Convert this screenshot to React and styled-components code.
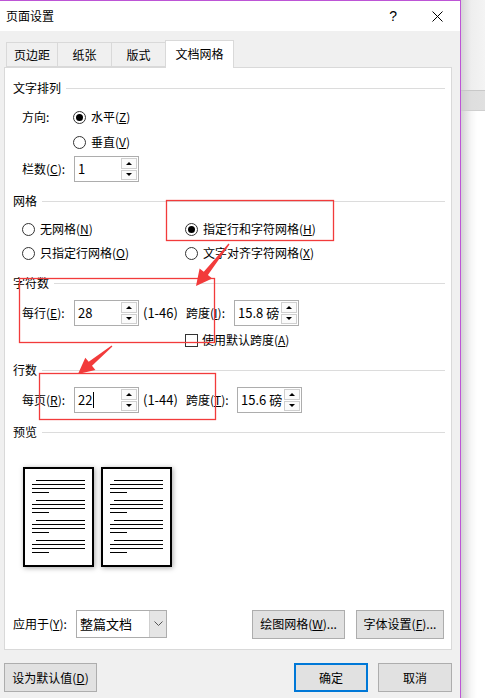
import styled, { createGlobalStyle } from "styled-components";

const GlobalStyle = createGlobalStyle`
    body{
        margin: 0;
        overflow: hidden;
        background: #fff;
        font-family: "Noto Sans CJK SC", "Noto Sans", "Liberation Sans", sans-serif;
        font-size: 12px;
        color: #000;
    }
`;

const Screen = styled.div`
    display: flex;
    width: 485px;
    height: 698px;
    overflow: hidden;
`;

const Dialog = styled.div`
    position: relative;
    width: 461px;
    flex-shrink: 0;
    box-sizing: border-box;
    border-top: 1px solid #bd55d6;
    border-right: 1px solid #bd55d6;
    background: #f0f0f0;
    display: flex;
    flex-direction: column;
`;

const TitleBar = styled.div`
    height: 30px;
    background: #fff;
    display: flex;
    align-items: center;
    padding-left: 6px;
    line-height: 16px;
`;

const TitleText = styled.div`
    flex: 1;
`;

const HelpBtn = styled.div`
    font-family: "Liberation Sans", sans-serif;
    font-size: 14px;
    margin-right: 35px;
`;

const CloseBtn = styled.svg`
    width: 11px;
    height: 11px;
    margin-right: 17px;
`;

const TabBar = styled.div`
    margin-top: 9px;
    height: 27px;
    padding-left: 7px;
    display: flex;
    align-items: flex-end;
    position: relative;
    z-index: 1;
`;

const Tab = styled.div`
    box-sizing: border-box;
    width: ${p => p.w}px;
    height: ${p => p.active ? 28 : 25}px;
    margin-left: -1px;
    margin-bottom: ${p => p.active ? -1 : 0}px;
    border: 1px solid #d9d9d9;
    border-bottom: ${p => p.active ? 'none' : '1px solid #d9d9d9'};
    background: ${p => p.active ? '#fff' : '#f0f0f0'};
    display: flex;
    justify-content: center;
    padding-top: ${p => p.active ? 5 : 4}px;
    line-height: 16px;
`;

const Panel = styled.div`
    margin-left: 4px;
    width: 448px;
    height: 583px;
    box-sizing: border-box;
    border: 1px solid #d9d9d9;
    background: #fff;
    display: flex;
    flex-direction: column;
    padding: 12px 6px 11px 8px;
`;

const Header = styled.div`
    display: flex;
    align-items: center;
    height: 16px;
    line-height: 16px;
    margin-top: ${p => p.mt || 0}px;
    gap: 5px;

    &::after{
        content: '';
        flex: 1;
        height: 1px;
        background: #dcdcdc;
    }
`;

const Row = styled.div`
    display: flex;
    align-items: center;
    height: ${p => p.h || 24}px;
    margin-top: ${p => p.mt || 0}px;
    padding-left: ${p => p.pl || 0}px;
    line-height: 16px;
    white-space: nowrap;
`;

const Label = styled.div`
    width: ${p => p.w ? p.w + 'px' : 'auto'};
    flex-shrink: 0;
`;

const RadioWrap = styled.div`
    display: flex;
    align-items: center;
    width: ${p => p.w ? p.w + 'px' : 'auto'};
`;

const RadioCircle = styled.span`
    width: 13px;
    height: 13px;
    box-sizing: border-box;
    border: 1px solid #333;
    border-radius: 50%;
    margin-right: 5px;
    display: flex;
    align-items: center;
    justify-content: center;

    &::after{
        content: '';
        width: 7px;
        height: 7px;
        border-radius: 50%;
        background: ${p => p.checked ? '#000' : 'transparent'};
    }
`;

const CheckBox = styled.span`
    width: 13px;
    height: 13px;
    box-sizing: border-box;
    border: 1px solid #333;
    margin-right: 4px;
`;

const SpinBox = styled.div`
    width: 65px;
    height: 26px;
    box-sizing: border-box;
    border: 1px solid #adadad;
    display: flex;
    background: #fff;
    flex-shrink: 0;
`;

const SpinValue = styled.div`
    flex: 1;
    padding-left: 3px;
    display: flex;
    align-items: center;
    line-height: 16px;
    font-size: 13px;
`;

const Caret = styled.span`
    width: 1px;
    height: 16px;
    background: #000;
    margin-left: 1px;
`;

const SpinButtons = styled.div`
    width: 16px;
    display: flex;
    flex-direction: column;
    padding: 1px 1px 1px 0;
    gap: 1px;
`;

const SpinHalf = styled.div`
    flex: 1;
    border: 1px solid #cfcfcf;
    background: #fbfbfb;
    display: flex;
    align-items: center;
    justify-content: center;

    &::after{
        content: '';
        border-left: 3px solid transparent;
        border-right: 3px solid transparent;
        border-bottom: ${p => p.up ? '3px solid #000' : 'none'};
        border-top: ${p => p.up ? 'none' : '3px solid #000'};
    }
`;

const RangeText = styled.div`
    margin-left: 4px;
    width: 43px;
    font-size: 13px;
`;

const GridCols = styled.div`
    display: flex;
`;

const PreviewRow = styled.div`
    display: flex;
    gap: 7px;
    margin-top: 27px;
    margin-left: 10px;
`;

const PreviewPage = styled.div`
    width: 71px;
    height: 100px;
    box-sizing: border-box;
    border: 2px solid #000;
    background: #fff;
    box-shadow: 1px 1px 5px rgba(0, 0, 0, 0.35);
    padding: 11px 7px 0 7px;
    display: flex;
    flex-direction: column;
    gap: 7px;
`;

const TextBlock = styled.div`
    display: flex;
    flex-direction: column;
    gap: 3px;
`;

const TextLine = styled.div`
    height: 1px;
    background: #000;
    margin-left: ${p => p.indent || 0}px;
    width: ${p => p.short ? '17px' : 'auto'};
`;

const ApplyRow = styled.div`
    margin-top: auto;
    display: flex;
    align-items: center;
    height: 28px;
    line-height: 16px;
`;

const Select = styled.div`
    width: 91px;
    height: 28px;
    box-sizing: border-box;
    border: 1px solid #adadad;
    display: flex;
    background: #fff;
`;

const SelectValue = styled.div`
    flex: 1;
    padding-left: 3px;
    display: flex;
    align-items: center;
    font-size: 13px;
`;

const SelectArrow = styled.div`
    width: 16px;
    background: #e5e5e5;
    border-left: 1px solid #cfcfcf;
    display: flex;
    align-items: center;
    justify-content: center;
`;

const ButtonGroup = styled.div`
    margin-left: auto;
    margin-right: 1px;
    display: flex;
    gap: ${p => p.gap || 11}px;
`;

const Button = styled.div`
    width: ${p => p.w}px;
    height: 29px;
    box-sizing: border-box;
    border: ${p => p.primary ? '2px solid #0078d7' : '1px solid #adadad'};
    background: #e1e1e1;
    display: flex;
    align-items: center;
    justify-content: center;
    line-height: 16px;
`;

const FooterBar = styled.div`
    margin-top: 13px;
    margin-left: 4px;
    width: 449px;
    display: flex;
    align-items: center;
`;

const Overlay = styled.svg`
    position: absolute;
    left: -1px;
    top: -1px;
    width: 461px;
    height: 698px;
    pointer-events: none;
`;

const Backdrop = styled.div`
    flex: 1;
    display: flex;
    flex-direction: column;
`;

const BackdropTop = styled.div`
    height: 90px;
    background: linear-gradient(to right, #d6d6d6, #eeeeee 10px, #f4f4f4);
`;

const BackdropBand = styled.div`
    height: 19px;
    border-top: 1px solid #c8c8c8;
    border-bottom: 1px solid #cfcfcf;
    background: linear-gradient(to right, #cfcfcf, #dedede 10px, #e0e0e0);
`;

const BackdropRest = styled.div`
    flex: 1;
    background: linear-gradient(to right, #d4d4d4, #f6f6f6 10px, #fff 16px);
`;

const Spin = ({ value, caret }) => (
    <SpinBox>
        <SpinValue>{value}{caret && <Caret />}</SpinValue>
        <SpinButtons>
            <SpinHalf up />
            <SpinHalf />
        </SpinButtons>
    </SpinBox>
);

const Radio = ({ checked, children, w }) => (
    <RadioWrap w={w}>
        <RadioCircle checked={checked} />
        <span>{children}</span>
    </RadioWrap>
);

const PreviewSheet = () => (
    <PreviewPage>
        {[0, 1, 2, 3].map(i => (
            <TextBlock key={i}>
                <TextLine indent={4} />
                <TextLine />
                <TextLine />
                <TextLine short />
            </TextBlock>
        ))}
    </PreviewPage>
);

// tapered red arrow from tail to tip
const arrowPoints = (tx, ty, px, py) => {
    const dx = px - tx, dy = py - ty;
    const len = Math.hypot(dx, dy);
    const ux = dx / len, uy = dy / len;
    const nx = -uy, ny = ux;
    const headLen = 16, headW = 8, neckW = 2.6, tailW = 0.6;
    const bx = px - ux * headLen, by = py - uy * headLen;
    const pts = [
        [tx + nx * tailW, ty + ny * tailW],
        [bx + nx * neckW, by + ny * neckW],
        [bx + nx * headW, by + ny * headW],
        [px, py],
        [bx - nx * headW, by - ny * headW],
        [bx - nx * neckW, by - ny * neckW],
        [tx - nx * tailW, ty - ny * tailW],
    ];
    return pts.map(p => p.map(v => v.toFixed(1)).join(',')).join(' ');
};

const App = () => {
    return (
        <>
            <GlobalStyle />
            <Screen>
                <Dialog>
                    <TitleBar>
                        <TitleText>页面设置</TitleText>
                        <HelpBtn>?</HelpBtn>
                        <CloseBtn viewBox="0 0 11 11">
                            <path d="M0.5 0.5 L10.5 10.5 M10.5 0.5 L0.5 10.5" stroke="#000" strokeWidth="1" />
                        </CloseBtn>
                    </TitleBar>

                    <TabBar>
                        <Tab w={52}>页边距</Tab>
                        <Tab w={55}>纸张</Tab>
                        <Tab w={55}>版式</Tab>
                        <Tab w={69} active>文档网格</Tab>
                    </TabBar>

                    <Panel>
                        <Header>文字排列</Header>
                        <Row mt={9} pl={9}>
                            <Label w={51}>方向:</Label>
                            <Radio checked>水平(<u>Z</u>)</Radio>
                        </Row>
                        <Row mt={1} pl={60}>
                            <Radio>垂直(<u>V</u>)</Radio>
                        </Row>
                        <Row mt={2} h={26} pl={9}>
                            <Label w={52}>栏数(<u>C</u>):</Label>
                            <Spin value="1" />
                        </Row>

                        <Header mt={11}>网格</Header>
                        <GridCols>
                            <div>
                                <Row mt={8} pl={9}>
                                    <Radio w={163}>无网格(<u>N</u>)</Radio>
                                </Row>
                                <Row pl={9}>
                                    <Radio w={163}>只指定行网格(<u>O</u>)</Radio>
                                </Row>
                            </div>
                            <div>
                                <Row mt={8}>
                                    <Radio checked>指定行和字符网格(<u>H</u>)</Radio>
                                </Row>
                                <Row>
                                    <Radio>文字对齐字符网格(<u>X</u>)</Radio>
                                </Row>
                            </div>
                        </GridCols>

                        <Header mt={10}>字符数</Header>
                        <Row mt={9} h={26} pl={9}>
                            <Label w={52}>每行(<u>E</u>):</Label>
                            <Spin value="28" />
                            <RangeText>(1-46)</RangeText>
                            <Label w={48}>跨度(<u>I</u>):</Label>
                            <Spin value="15.8 磅" />
                        </Row>
                        <Row mt={4} h={20} pl={172}>
                            <CheckBox />
                            <span>使用默认跨度(<u>A</u>)</span>
                        </Row>

                        <Header mt={12}>行数</Header>
                        <Row mt={9} h={26} pl={9}>
                            <Label w={52}>每页(<u>R</u>):</Label>
                            <Spin value="22" caret />
                            <RangeText>(1-44)</RangeText>
                            <Label w={51}>跨度(<u>T</u>):</Label>
                            <Spin value="15.6 磅" />
                        </Row>

                        <Header mt={11}>预览</Header>
                        <PreviewRow>
                            <PreviewSheet />
                            <PreviewSheet />
                        </PreviewRow>

                        <ApplyRow>
                            <Label w={63}>应用于(<u>Y</u>):</Label>
                            <Select>
                                <SelectValue>整篇文档</SelectValue>
                                <SelectArrow>
                                    <svg width="9" height="6" viewBox="0 0 9 6">
                                        <path d="M0.5 0.5 L4.5 4.5 L8.5 0.5" fill="none" stroke="#555" strokeWidth="1" />
                                    </svg>
                                </SelectArrow>
                            </Select>
                            <ButtonGroup>
                                <Button w={93}>绘图网格(<u>W</u>)...</Button>
                                <Button w={88}>字体设置(<u>F</u>)...</Button>
                            </ButtonGroup>
                        </ApplyRow>
                    </Panel>

                    <FooterBar>
                        <Button w={93}>设为默认值(<u>D</u>)</Button>
                        <ButtonGroup gap={10}>
                            <Button w={74} primary>确定</Button>
                            <Button w={74}>取消</Button>
                        </ButtonGroup>
                    </FooterBar>

                    <Overlay viewBox="0 0 461 698">
                        <g fill="none" stroke="#f23b3b" strokeWidth="1.3">
                            <rect x="167.5" y="200.5" width="167" height="40" />
                            <rect x="20.5" y="278.5" width="195" height="64" />
                            <rect x="40.5" y="373.5" width="176" height="46" />
                        </g>
                        <polygon points={arrowPoints(230, 244, 197, 286)} fill="#f23b3b" />
                        <polygon points={arrowPoints(113, 346, 79, 374)} fill="#f23b3b" />
                    </Overlay>
                </Dialog>
                <Backdrop>
                    <BackdropTop />
                    <BackdropBand />
                    <BackdropRest />
                </Backdrop>
            </Screen>
        </>
    );
};

export default App;
